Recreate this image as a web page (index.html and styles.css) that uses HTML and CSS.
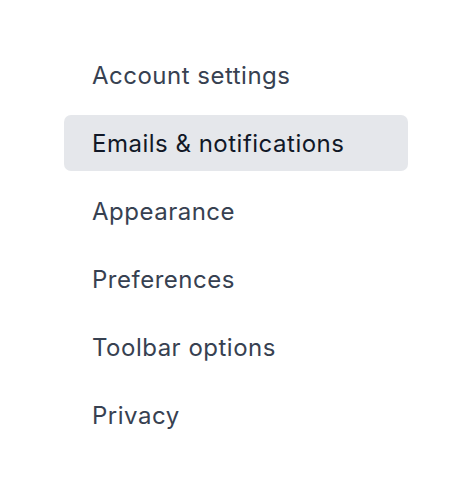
FILE: index.html
```html
<!DOCTYPE html>
<html lang="en">
<head>
  <meta charset="UTF-8">
  <meta name="viewport" content="width=device-width, initial-scale=1.0">
  <title>Settings</title>
  <link rel="stylesheet" href="styles.css">
</head>
<body>
<nav class="settings-nav">
  <a href="#" class="nav-item">Account settings</a>
  <a href="#" class="nav-item active">Emails &amp; notifications</a>
  <a href="#" class="nav-item">Appearance</a>
  <a href="#" class="nav-item">Preferences</a>
  <a href="#" class="nav-item">Toolbar options</a>
  <a href="#" class="nav-item">Privacy</a>
</nav>
</body>
</html>
```

FILE: styles.css
```css
body {
  font-family: 'Inter', sans-serif;
  background-color: #fff;
  margin: 0;
  padding: 47px 64px;
}

.settings-nav {
  display: flex;
  flex-direction: column;
  gap: 12px;
}

.nav-item {
  display: flex;
  align-items: center;
  height: 56px;
  padding: 0 28px;
  border-radius: 7px;
  font-size: 24px;
  letter-spacing: 0.5px;
  color: #374151;
  text-decoration: none;
}

.nav-item.active {
  background-color: #e5e7eb;
  color: #111827;
}
```
